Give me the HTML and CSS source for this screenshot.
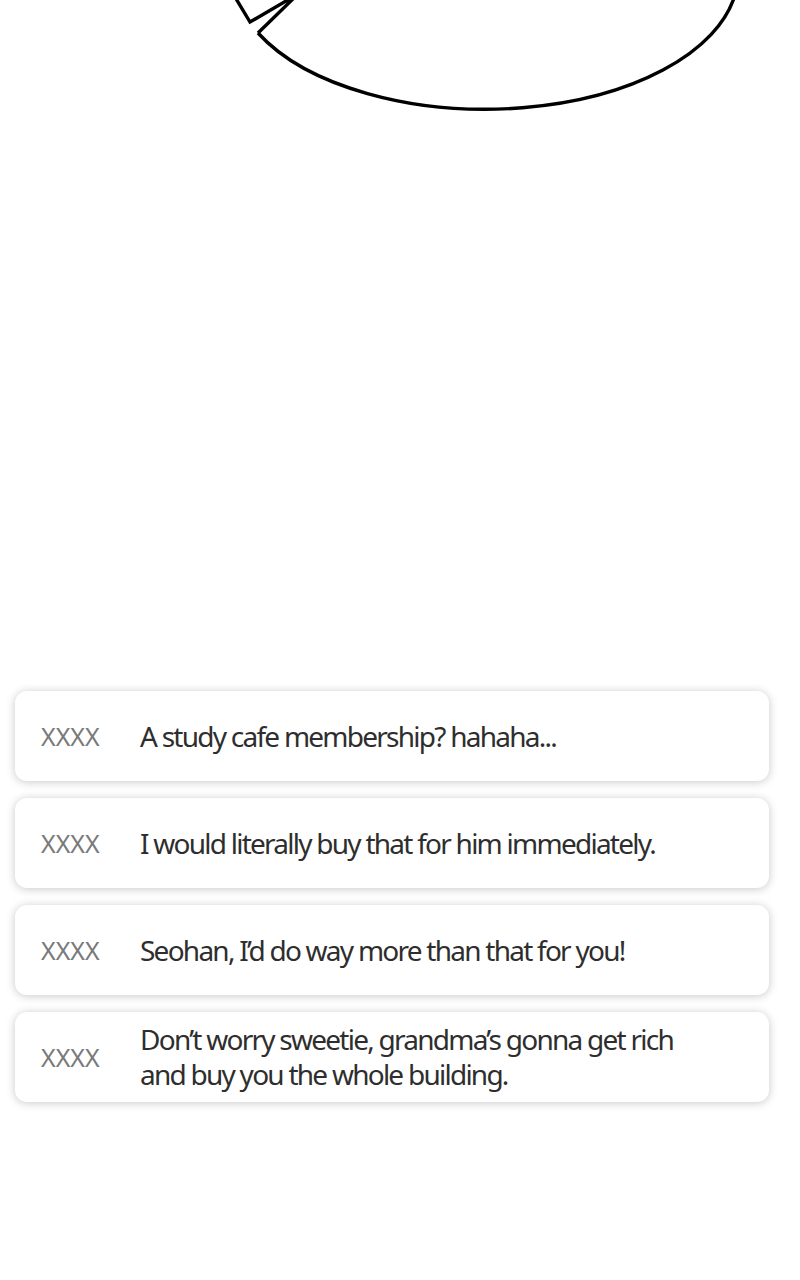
FILE: index.html
```html
<!DOCTYPE html>
<html>
<head>
  <meta charset="utf-8">
  <meta name="viewport" content="width=device-width">
  <title>Comments</title>
  <link rel="stylesheet" href="styles.css">
</head>
<body>

  <div class="panel">
    <!-- bottom of the speech balloon from the panel above -->
    <svg class="balloon" width="800" height="112" viewBox="0 0 800 112">
      <path d="M258 33 A253 136 0 0 0 735 -5" />
      <path d="M258 33 L298 -6 L250 22 L232 -8" />
    </svg>
  </div>

  <ul class="comments">
    <li class="comment">
      <span class="name">XXXX</span>
      <p class="text">A study cafe membership? hahaha...</p>
    </li>
    <li class="comment">
      <span class="name">XXXX</span>
      <p class="text">I would literally buy that for him immediately.</p>
    </li>
    <li class="comment">
      <span class="name">XXXX</span>
      <p class="text">Seohan, I’d do way more than that for you!</p>
    </li>
    <li class="comment">
      <span class="name">XXXX</span>
      <p class="text">Don’t worry sweetie, grandma’s gonna get rich<br>and buy you the whole building.</p>
    </li>
  </ul>

</body>
</html>
```

FILE: styles.css
```css
body {
  margin: 0;
  background: #fff;
  font-family: "Noto Sans", "Open Sans", sans-serif;
  color: #333;
}
.panel {
  height: 112px;
  overflow: hidden;
}
.balloon {
  display: block;
}
.balloon path {
  fill: none;
  stroke: #000;
  stroke-width: 3.4;
  stroke-linejoin: miter;
}
.comments {
  list-style: none;
  margin: 579px 0 0;
  padding: 0 31px 60px 15px;
  display: flex;
  flex-direction: column;
  gap: 17px;
}
.comment {
  display: flex;
  align-items: center;
  height: 90px;
  padding: 0 26px;
  background: #fff;
  border-radius: 12px;
  box-shadow: 0 1px 10px rgba(0, 0, 0, 0.22);
}
.name {
  flex: 0 0 99px;
  font-size: 25px;
  letter-spacing: 0;
  color: #7a7a7a;
}
.text {
  margin: 0;
  font-size: 28px;
  line-height: 35px;
  letter-spacing: -1.75px;
  color: #2e2e2e;
}
```
